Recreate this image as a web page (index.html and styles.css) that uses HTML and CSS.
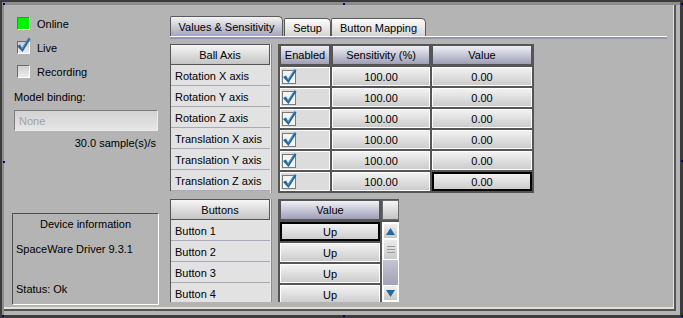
FILE: index.html
```html
<!DOCTYPE html>
<html lang="en">
<head>
    <meta charset="UTF-8">
    <title>Device Panel</title>
    <link rel="stylesheet" href="styles.css">
</head>
<body>
    <div class="window">
        <div class="frame">
            <div class="panel">
                <div class="inner">
                    <aside class="side">
                        <div class="check-row"><span class="led"></span>Online</div>
                        <div class="check-row">
                            <span class="box">
                                <svg class="tick" width="15" height="17" viewBox="0 0 15 17"><polygon points="1,9 4,7.5 6,11 12.5,0.5 14.5,2 6.5,15" fill="#21679a"/><polygon points="4,7.5 6,11 12.5,0.5 13,1 6.2,12.5" fill="#5fa3d0"/></svg>
                            </span>Live
                        </div>
                        <div class="check-row"><span class="box"></span>Recording</div>
                        <div class="field-label">Model binding:</div>
                        <div class="select">None</div>
                        <div class="rate">30.0 sample(s)/s</div>
                        <div class="device">
                            <div class="device-title">Device information</div>
                            <div class="driver">SpaceWare Driver 9.3.1</div>
                            <div class="status">Status: Ok</div>
                        </div>
                    </aside>

                    <main class="main">
                        <div class="tabs">
                            <div class="tab active">Values &amp; Sensitivity</div>
                            <div class="tab setup">Setup</div>
                            <div class="tab mapping">Button Mapping</div>
                        </div>
                        <div class="tab-line"></div>

                        <div class="pair axes">
                            <div class="names">
                                <div class="hd">Ball Axis</div>
                                <div class="name">Rotation X axis</div>
                                <div class="name">Rotation Y axis</div>
                                <div class="name">Rotation Z axis</div>
                                <div class="name">Translation X axis</div>
                                <div class="name">Translation Y axis</div>
                                <div class="name">Translation Z axis</div>
                            </div>
                            <div class="split"></div>
                            <div class="grid axis-grid" id="axisGrid">
                                <div class="hd blue">Enabled</div>
                                <div class="hd blue">Sensitivity (%)</div>
                                <div class="hd blue">Value</div>
                            </div>
                        </div>

                        <div class="pair buttons">
                            <div class="names">
                                <div class="hd">Buttons</div>
                                <div class="name">Button 1</div>
                                <div class="name">Button 2</div>
                                <div class="name">Button 3</div>
                                <div class="name">Button 4</div>
                            </div>
                            <div class="split"></div>
                            <div class="grid button-grid">
                                <div class="hd blue">Value</div>
                                <div class="hd corner"></div>
                                <div class="cell focus">Up</div>
                                <div class="scrollbar">
                                    <div class="sb-btn">
                                        <svg width="9" height="7" viewBox="0 0 9 7"><polygon points="4.5,0 9,7 0,7" fill="#1f6aa0"/></svg>
                                    </div>
                                    <div class="sb-thumb"><span></span><span></span><span></span></div>
                                    <div class="sb-track"></div>
                                    <div class="sb-btn">
                                        <svg width="9" height="7" viewBox="0 0 9 7"><polygon points="0,0 9,0 4.5,7" fill="#1f6aa0"/></svg>
                                    </div>
                                </div>
                                <div class="cell">Up</div>
                                <div class="cell">Up</div>
                                <div class="cell">Up</div>
                            </div>
                        </div>
                    </main>
                </div>
            </div>
        </div>

        <span class="handle" style="left:1px;top:1px"></span>
        <span class="handle" style="left:341px;top:1px"></span>
        <span class="handle" style="left:679px;top:1px"></span>
        <span class="handle" style="left:1px;top:159px"></span>
        <span class="handle" style="left:679px;top:158px"></span>
        <span class="handle" style="left:0px;top:313px"></span>
        <span class="handle" style="left:341px;top:313px"></span>
        <span class="handle" style="left:679px;top:313px"></span>
    </div>

    <script>
        const axisGrid = document.getElementById('axisGrid');
        const tickSvg = '<svg width="15" height="15" viewBox="0 0 15 15"><rect x="0.5" y="1.5" width="13" height="13" fill="#f4f4f4" stroke="#7a7a7a"/><polygon points="1,8 4,6.5 6,10 12.5,0 14.5,1.5 6.5,14" fill="#21679a"/><polygon points="4,6.5 6,10 12.5,0 13,0.6 6.2,11.5" fill="#5fa3d0"/></svg>';

        for (let i = 0; i < 6; i++) {
            const last = i === 5;
            axisGrid.insertAdjacentHTML('beforeend',
                `<div class="cell check">${tickSvg}</div>` +
                `<div class="cell">100.00</div>` +
                `<div class="cell${last ? ' focus' : ''}">0.00</div>`);
        }
    </script>
</body>
</html>
```

FILE: styles.css
```css
:root {
    --bg: #b4b4b4;
    --dark: #555;
    --edge: #3c3c3c;
    --row-line: #a9a9bc;
}

body {
    margin: 0;
    font-family: "Liberation Sans", Arial, sans-serif;
    font-size: 11px;
    color: #000;
    background: var(--bg);
}

.window {
    position: relative;
    width: 683px;
    height: 318px;
    box-sizing: border-box;
    border-style: solid;
    border-color: var(--edge);
    border-width: 2px 3px 3px 2px;
}

.frame {
    height: 100%;
    box-sizing: border-box;
    border-top: 3px solid #8c8c8c;
    border-left: 2px solid #8c8c8c;
    padding: 0 4px 4px 0;
}

.panel {
    height: 100%;
    box-sizing: border-box;
    border-right: 2px solid var(--dark);
    border-bottom: 2px solid var(--dark);
}

.inner {
    height: 100%;
    box-sizing: border-box;
    border-right: 1px solid #e4e1d6;
    border-bottom: 2px solid #e4e1d6;
    display: flex;
}

.handle {
    position: absolute;
    width: 2px;
    height: 2px;
    background: #000080;
}

/* left side */
.side {
    width: 166px;
    flex: none;
    box-sizing: border-box;
    padding: 12px 0 2px 10px;
    display: flex;
    flex-direction: column;
}

.check-row {
    display: flex;
    align-items: flex-start;
    gap: 7px;
    height: 13px;
    line-height: 15px;
    margin: 0 0 11px 3px;
}

.led,
.box {
    width: 13px;
    height: 13px;
    flex: none;
    box-sizing: border-box;
    border: 1px solid;
    border-color: #6c6c6c #fff #fff #6c6c6c;
}

.led {
    background: #00f400;
}

.box {
    position: relative;
    background: linear-gradient(#cfcfcf, #ececec);
}

.box .tick {
    position: absolute;
    left: -2px;
    top: -5px;
}

.field-label {
    margin-top: 2px;
    line-height: 13px;
}

.select {
    margin-top: 6px;
    width: 144px;
    height: 21px;
    box-sizing: border-box;
    border: 1px solid;
    border-color: #7c7c7c #ececec #ececec #7c7c7c;
    background: linear-gradient(#d2d2d2, #e6e6e6);
    color: #a2a2a2;
    line-height: 20px;
    padding-left: 4px;
}

.rate {
    margin-top: 6px;
    line-height: 13px;
    text-align: right;
    padding-right: 14px;
}

.device {
    margin: auto 0 0 -2px;
    width: 147px;
    height: 92px;
    box-sizing: border-box;
    border: 1px solid;
    border-color: #505050 #fff #fff #505050;
    padding: 4px 3px;
    line-height: 13px;
}

.device-title {
    text-align: center;
}

.driver {
    margin-top: 12px;
}

.status {
    margin-top: 27px;
}

/* tabs */
.main {
    flex: 1;
    padding: 11px 6px 0 0;
    display: flex;
    flex-direction: column;
}

.tabs {
    display: flex;
    align-items: flex-end;
    height: 20px;
}

.tab {
    height: 18px;
    box-sizing: border-box;
    border: 1px solid #5a5a5a;
    border-bottom: none;
    border-radius: 2px 5px 0 0;
    background: linear-gradient(#fdfdfd, #d4d4d4);
    text-align: center;
    line-height: 13px;
    padding-top: 3px;
}

.tab.active {
    width: 113px;
    height: 20px;
    padding-top: 4px;
    background: linear-gradient(#f4f4f4, #a4a4bc);
}

.tab.setup {
    width: 47px;
    margin-left: 1px;
}

.tab.mapping {
    width: 95px;
}

.tab-line {
    height: 3px;
    box-sizing: border-box;
    border-top: 1px solid #fff;
    background: #9494ac;
}

/* tables */
.pair {
    display: flex;
    align-items: flex-start;
}

.axes {
    margin-top: 5px;
}

.buttons {
    margin-top: 6px;
    height: 103px;
    overflow: hidden;
}

.names {
    width: 100px;
    flex: none;
    box-sizing: border-box;
    border-left: 1px solid var(--dark);
}

.hd {
    height: 21px;
    box-sizing: border-box;
    border: 1px solid var(--dark);
    background: linear-gradient(#f6f6f6, #c4c4c4);
    text-align: center;
    line-height: 13px;
    padding-top: 4px;
}

.names .hd {
    border-left: none;
}

.hd.blue {
    background: linear-gradient(#f0f0f6, #9e9eb6);
}

.name {
    height: 21px;
    box-sizing: border-box;
    border-bottom: 1px solid var(--row-line);
    background: #e2e2e2;
    line-height: 13px;
    padding: 5px 0 0 4px;
}

.split {
    width: 8px;
    flex: none;
    align-self: stretch;
    box-sizing: border-box;
    border-left: 1px solid #ececec;
    box-shadow: inset 1px 0 #8c8c8c;
}

.grid {
    display: grid;
    gap: 2px;
    padding: 1px 2px 2px;
    background: var(--dark);
}

.axis-grid {
    grid-template-columns: 50px 98px 100px;
    grid-template-rows: 20px repeat(6, 19px);
}

.button-grid {
    grid-template-columns: 100px 17px;
    grid-template-rows: 20px repeat(4, 19px);
    padding: 1px 0 0 2px;
}

.button-grid .corner {
    border-color: #6a6a6a;
}

.grid .hd {
    height: auto;
    padding-top: 3px;
}

.cell {
    box-sizing: border-box;
    border: 1px solid #fff;
    background: linear-gradient(#f2f2f2, #cccccc);
    text-align: center;
    line-height: 13px;
    padding-top: 3px;
}

.cell.check {
    background: #dcdcdc;
    text-align: left;
    padding: 1px 0 0 1px;
}

.cell.check svg {
    display: block;
}

.cell.focus {
    border: 2px solid #000;
    padding-top: 2px;
}

/* scrollbar */
.scrollbar {
    grid-row: 2 / span 4;
    grid-column: 2;
    height: 80px;
    display: flex;
    flex-direction: column;
    border: 1px solid #fff;
    box-sizing: border-box;
    background: var(--bg);
}

.sb-btn {
    height: 16px;
    flex: none;
    box-sizing: border-box;
    border: 1px solid #fff;
    background: linear-gradient(#f0f0f0, #c8c8c8);
    display: flex;
    align-items: center;
    justify-content: center;
}

.sb-thumb {
    height: 21px;
    flex: none;
    box-sizing: border-box;
    border: 1px solid #fff;
    background: linear-gradient(#ececec, #cacaca);
    display: flex;
    flex-direction: column;
    align-items: center;
    justify-content: center;
    gap: 2px;
}

.sb-thumb span {
    width: 8px;
    height: 1px;
    background: #9c9c9c;
}

.sb-track {
    flex: 1;
    background: linear-gradient(#c4c4d2, #a2a2b8);
}
```
